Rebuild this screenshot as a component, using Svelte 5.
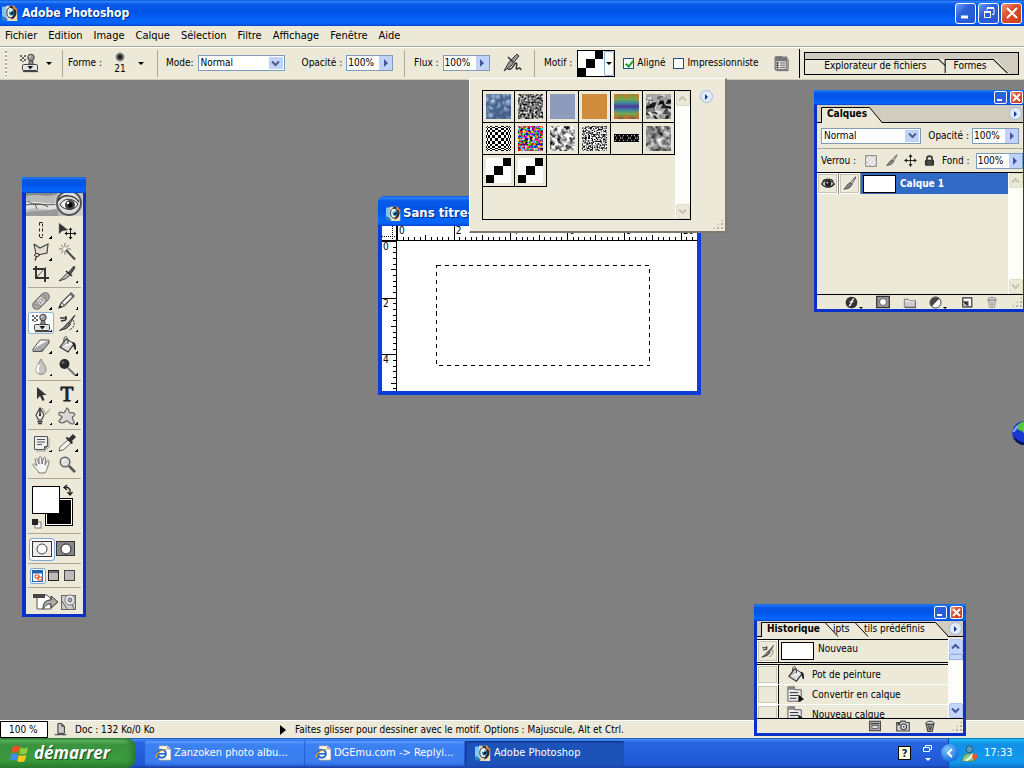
<script>
  const menus = ['Fichier', 'Edition', 'Image', 'Calque', 'Sélection', 'Filtre', 'Affichage', 'Fenêtre', 'Aide'];

  let aligned = $state(true);
  let impressionist = $state(false);

  const icons = {
    marquee: '<path d="M8.500 2.500h3v4M8.500 2.500v4M8.500 8.500v4M11.500 8.500v4M8.500 14v3.500h3V14" fill="none" stroke="#222" stroke-dasharray="3 1"/>',
    move: '<path d="M2 3v11l3-3 6-1z" fill="#333" stroke="#888" stroke-width=".5"/><path d="M13.500 9v9M9 13.500h9" stroke="#111"/><path d="M13.500 7.500l2 2.500h-4zM13.500 19.500l2-2.500h-4zM7.500 13.500l2.500-2v4zM19.500 13.500l-2.500-2v4z" fill="#111"/>',
    lasso: '<path d="M3 2l6 4 8-4-1 9-9 2M3 2l2 10" fill="#e2dfd0" stroke="#444" stroke-width="1.200"/><ellipse cx="6" cy="13" rx="2.500" ry="1.500" fill="none" stroke="#333"/><path d="M5.500 14.500l-1.500 4" stroke="#333" stroke-width="1.300"/>',
    wand: '<path d="M8 7l10 10.500" stroke="#444" stroke-width="2"/><path d="M8 1v4M8 9v4M2 7h4M10 7h4M4 3l2.500 2.500M12 3L9.500 5.500M4 11l2.500-2.500" stroke="#777"/><circle cx="8" cy="7" r="1.500" fill="#fff"/>',
    crop: '<path d="M5 2v12h13M2 5h12v13" fill="none" stroke="#333" stroke-width="2"/><path d="M6 13l9-10" stroke="#555"/>',
    slice: '<path d="M17 2l-6 7 2 2 5-7z" fill="#555" stroke="#222" stroke-width=".7"/><path d="M11 8.500l2.500 2.500L8 15l-6 2z" fill="#bbb" stroke="#444"/><path d="M9 7l6 5" stroke="#222" stroke-width="1.500"/>',
    heal: '<g transform="rotate(-45 10 10)"><rect x="0" y="6" width="20" height="8" rx="4" fill="#aaa9a4" stroke="#666"/><rect x="6.500" y="6.500" width="7" height="7" fill="#d4d4d0" stroke="#888" stroke-width=".7"/><path d="M8 9h1M11 9h1M8 11h1M11 11h1M3 9h1M4 11h1M16 9h1M15 11h1" stroke="#555"/></g>',
    pencil: '<path d="M14 2l3 3L7 15l-5 2 2-5z" fill="#f4f4f4" stroke="#444" stroke-width="1.200"/><path d="M13 3l3.500 3.500M5 12l3 3" stroke="#777" stroke-width="1.300"/><path d="M2 17l1-3 2 2z" fill="#111"/>',
    stamp: '<path d="M1 2h2v2H1zM3 4h2v2H3zM5 2h2v2H5zM1 6h2v2H1zM5 6h2v2H5zM3 8h2v1H3z" fill="#666"/><circle cx="12" cy="4.500" r="3.300" fill="#999" stroke="#444"/><circle cx="11" cy="3.500" r="1" fill="#ddd"/><path d="M10.500 7.500h3l1 5h-5z" fill="#888" stroke="#444"/><rect x="3.500" y="11.500" width="15" height="6" rx="1" fill="#e4e4e0" stroke="#444"/><path d="M8.500 13h5.500l-2.700 3.500z" fill="#111"/><path d="M4 18.500h15" stroke="#444" stroke-width="1.300"/>',
    history: '<path d="M18 2l-7 8 1.500 1.500z" fill="#999" stroke="#333"/><path d="M11 9.500l2.500 2-4 4-7 2 4-3z" fill="#777" stroke="#333"/><path d="M3 5h6M4 8l5-1M9 3v4" stroke="#333" stroke-width="1.500" fill="none"/><path d="M16 7c3 4 0 9-4 10" fill="none" stroke="#333" stroke-dasharray="2 1"/>',
    eraser: '<path d="M9 5h9l-7 9H2z" fill="#f5f5f5" stroke="#555"/><path d="M2 14v2.500h9L18 8V5M11 14v2.500" fill="#aaa" stroke="#555"/>',
    bucket: '<path d="M9 4l8 5-6 8-8-5z" fill="#ddd" stroke="#333" stroke-width="1.200"/><path d="M4 12l8-6 5 3" fill="#f8f8f8" stroke="#666" stroke-width=".7"/><path d="M7 8c-1-8 3-8 4-3v4" fill="none" stroke="#444"/><path d="M15 7c4 0 4 3 4 8-2 0-2-3-3-5z" fill="#222"/>',
    drop: '<path d="M10 2c2 4 5 7 5 10.500a5 5 0 0 1-10 0C5 9 8 6 10 2z" fill="#c4c4c0" stroke="#888"/><path d="M8 8c-2 3-2 6 0 7" stroke="#fff" stroke-width="2.500" fill="none"/>',
    dodge: '<circle cx="7.500" cy="7" r="5" fill="#2a2a2a"/><circle cx="6" cy="5.500" r="1.500" fill="#666"/><path d="M11 11l7 7" stroke="#777" stroke-width="2"/>',
    select: '<path d="M6 3v12l3-3L11.500 17l2-1-2-5h4z" fill="#333"/>',
    pen: '<path d="M9 2l4 7-2.500 5h-3L5 9z" fill="#eee" stroke="#444" stroke-width="1.200"/><path d="M9 2v7M6.500 15.500h5M7 17.500h4" stroke="#333" stroke-width="1.500"/><circle cx="9" cy="9" r="1.200" fill="#333"/><path d="M11 2l4 6 4-5" fill="none" stroke="#333" stroke-dasharray="1 1"/>',
    shape: '<path d="M10 2c3 1 1 4 3 5 4-1 6 1 4 3-5 1 3 7-1 8-4 0-5-4-7-3-2 2-6 3-7 0 1-3 5-3 2-5-3-1-3-4 0-4 3 2 4 0 6-4z" fill="#d8d8d5" stroke="#666" stroke-width="1.200"/>',
    notes: '<path d="M3.500 3.500h13v10l-3 3h-10z" fill="#eee" stroke="#555"/><path d="M13.500 16.500v-3h3" fill="#888" stroke="#555"/><path d="M6 6.500h8M6 9h8M6 11.500h5" stroke="#555"/><path d="M5 18h9l4-4V5" stroke="#999" fill="none"/>',
    dropper: '<path d="M11 7l3 3-8 7-4 1 1-4z" fill="#f4f4f4" stroke="#666"/><path d="M12 5l4-4 3 3-4 4 1 2-1.500 1-6-6L10 4z" fill="#333"/>',
    hand: '<path d="M8 18c-1-3-6-7-6-8.500 1-1.500 2.500 0 4 1.500L4 5c0-2 2-2 2.500 0L8 9V3c.5-2 2-2 2.500 0L11 9l1.500-6c1-1.500 2.500-.5 2 1L14 10l2-4c1-1 2.500-.5 2 1-1 4-2 8-4 11z" fill="#f4f4f2" stroke="#777"/>',
    zoom: '<circle cx="8" cy="7" r="4.800" fill="#ddd" stroke="#666" stroke-width="1.500"/><path d="M12 11l6 6" stroke="#555" stroke-width="2.500"/><path d="M5.500 6.500l2-2" stroke="#fff" stroke-width="1.500"/>',
    brush: '<path d="M18 1l-7 8 2 2 5-8z" fill="#ddd" stroke="#333"/><path d="M11 9l2.500 2.500c-2 4-6 6-11 6 3-2 4-7 8.500-8.500z" fill="#888" stroke="#333"/>',
    airbrush: '<path d="M15 1l-8 8-5 9 7-5 8-10z" fill="#999" stroke="#333"/><path d="M6 4l5 5M6 16c5 2 5-5 8-6 2 0-1 7 1 6s3-2 4 1" fill="none" stroke="#333" stroke-width="1.500"/>',
    page: '<path d="M3.500 3.500h13v14h-13z" fill="#ddd" stroke="#444"/><path d="M4 2.500h7l1 2h5V8H4z" fill="#777"/><path d="M5 10h2M5 12.500h2M5 15h2" stroke="#111" stroke-width="1.500"/><path d="M9 10h6M9 12.500h6M9 15h6" stroke="#666"/><path d="M5 18.500h13V6" fill="none" stroke="#666"/>',
    action: '<path d="M2 2h7v3h7v12H2z" fill="#eee" stroke="#555"/><path d="M2 2h7v3H2z" fill="#888"/><path d="M4 8h9M4 11h9M4 14h7" stroke="#222"/><path d="M13 10v8l6-3z" fill="#111"/>',
    checker: '<rect x="3.500" y="3.500" width="13" height="13" fill="#fff" stroke="#555"/><path d="M4 4h3v3H4zM10 4h3v3h-3zM7 7h3v3H7zM13 7h3v3h-3zM4 10h3v3H4zM10 10h3v3h-3zM7 13h3v3H7zM13 13h3v3h-3z" fill="#ccc"/>',
    cross: '<path d="M10 3v14M3 10h14" stroke="#222" stroke-width="1.500"/><path d="M10 0l3 4.500H7zM10 20l3-4.500H7zM0 10l4.500-3v6zM20 10l-4.500-3v6z" fill="#222"/>',
    lock: '<path d="M6 10V7c0-5 8-5 8 0v3" fill="none" stroke="#333" stroke-width="2.500"/><rect x="3" y="9" width="14" height="9" rx="2" fill="#333"/><path d="M6 12h8M6 15h8" stroke="#777"/>',
    eye: '<path d="M1 10c4-7 13-7 18 0-5 6-14 6-18 0z" fill="#ddd" stroke="#222" stroke-width="1.800"/><circle cx="10" cy="9.500" r="4.500" fill="#222"/><circle cx="9" cy="8" r="1.200" fill="#fff"/><path d="M2 6c4-4 12-4 16 0" fill="none" stroke="#333" stroke-width="1.500"/>',
    effect: '<circle cx="10" cy="10" r="9" fill="#333"/><path d="M14 5c-5-1-3 10-8 10M7 9h6" stroke="#fff" stroke-width="2" fill="none"/>',
    mask: '<rect x="1" y="2" width="18" height="16" fill="#999" stroke="#333" stroke-width="1.800"/><circle cx="10" cy="10" r="5" fill="#fff" stroke="#333"/>',
    folder: '<path d="M2 5h6l2 2h9v10H2z" fill="#ccc" stroke="#666" stroke-width="1.200"/><path d="M3 8h15" stroke="#fff"/><path d="M3 18h17V8" fill="none" stroke="#222"/>',
    adjust: '<circle cx="10" cy="10" r="8.500" fill="#fff" stroke="#333" stroke-width="1.500"/><path d="M16 4A8.500 8.500 0 0 0 4 16z" fill="#444"/>',
    newlayer: '<path d="M3 3h15v15H3z" fill="#fff" stroke="#333" stroke-width="2"/><path d="M3 9h9v9H3z" fill="#bbb" stroke="#333"/><path d="M4 10l7 7v-7z" fill="#222"/>',
    trash: '<path d="M4 7h12l-2 12H6z" fill="#e8e8e8" stroke="#888" stroke-width="1.500"/><path d="M3 5c3-4 11-4 14 0v2H3zM8 9l1 8M12 9l-1 8" fill="#ccc" stroke="#888" stroke-width="1.500"/>',
    trashdark: '<path d="M4 7h12l-2 12H6z" fill="#aaa" stroke="#222" stroke-width="1.500"/><path d="M3 5c3-4 11-4 14 0v2H3zM8 9l1 8M12 9l-1 8" fill="#ddd" stroke="#222" stroke-width="1.500"/>',
    snapshot: '<rect x="1" y="2" width="18" height="16" fill="#aaa" stroke="#333" stroke-width="1.500"/><rect x="5" y="9" width="10" height="5" fill="#ddd" stroke="#333"/><path d="M3 6h14" stroke="#444" stroke-width="2"/>',
    camera: '<path d="M1 5h5l1-2h6l1 2h5v12H1z" fill="#ccc" stroke="#444" stroke-width="1.500"/><path d="M2 5h4v4H2z" fill="#444"/><circle cx="11" cy="11" r="4" fill="#fff" stroke="#333" stroke-width="1.500"/><circle cx="11" cy="11" r="1.500" fill="#444"/>',
    doc: '<path d="M6 1h6l4 4v11H6z" fill="#ccc" stroke="#333" stroke-width="1.500"/><path d="M12 1v4h4M1 18h6M14 18h5M6 18h9" fill="none" stroke="#333" stroke-width="1.500"/>',
    photoshop: '<path d="M0 2h9v16H0z" fill="#7fc8ee"/><path d="M5 1h10l4 7v12H6z" fill="#f2dcb8"/><path d="M0 14c3 0 5 2 8 5H0z" fill="#2d82c0"/><path d="M9 1c6-1 10 4 9 10-1 4-4 7-7 7 4-4 3-11-2-17z" fill="#3a2020"/><path d="M13 4l3-3 1 3 3 1-2 2z" fill="#e08a3a"/><ellipse cx="10.500" cy="9.500" rx="4.500" ry="6.500" fill="#e9f7fa" stroke="#28384a" stroke-width="1.300"/><circle cx="12" cy="10" r="3.200" fill="#1c86b4"/><circle cx="12.500" cy="10" r="1.800" fill="#061522"/><circle cx="11" cy="8" r="1" fill="#fff"/>',
    ie: '<path d="M5 1h11l4 4v14H5z" fill="#fff" stroke="#889"/><path d="M16 1v4h4" fill="#ccd" stroke="#889"/><circle cx="8.500" cy="11" r="5" fill="none" stroke="#1d64d0" stroke-width="2.500"/><path d="M4 11h9" stroke="#1d64d0" stroke-width="2"/><path d="M1 16C1 11 9 4 15 6" fill="none" stroke="#e4a32b" stroke-width="1.400"/>',
    flag: '<path d="M3 3c3-2 5-1 7 0L8.500 9.500c-2-1-4-1-7 .5z" fill="#f25022"/><path d="M11 3.500c3 1.500 5 1.500 8 0L17.500 10c-3 1.500-5 1-8 0z" fill="#8ccf3c"/><path d="M1.200 11c3-1.500 5-1 7 0L6.500 17.500c-2-1-4-1.500-6.500 0z" fill="#3f8df5"/><path d="M9.200 11.500c3 1 5 1.500 8 0L15.500 18c-3 1.500-5 1-8 0z" fill="#ffc91f"/>',
    buddy: '<circle cx="10" cy="5" r="4" fill="#5a9ac8" stroke="#254"/><path d="M1 19c1-7 5-9 9-9s6 4 6 9z" fill="#8cc880" stroke="#375"/><path d="M2 18c4-1 9-4 11-9l2 4-7 6z" fill="#e4f4e0"/><path d="M14 11c2-2 4-1 5 1s-1 5-3 6c-2-1-4-4-2-7z" fill="#e4582b"/>',
    globe: '<circle cx="10" cy="10" r="9.800" fill="#1a36d0"/><path d="M5 3c3-3 8-3 11-1l3 7-5 1-2 3-3-4-4-2z" fill="#4fc83c"/><path d="M9 5l4 2-3 2z" fill="#a8c830"/><path d="M1 13a9.500 9.500 0 0 0 15 5c-6 1-11-1-15-5z" fill="#06124a"/><path d="M1 9l4-5" stroke="#8aa2ff" stroke-width="2"/>'
  };

  const toolGroups = [
    ['marquee', 'move', 'lasso', 'wand', 'crop', 'slice'],
    ['heal', 'pencil', 'stamp', 'history', 'eraser', 'bucket', 'drop', 'dodge'],
    ['select', 'type', 'pen', 'shape'],
    ['notes', 'dropper', 'hand', 'zoom']
  ];
  const single = ['move', 'wand', 'hand', 'crop', 'zoom'];

  const patterns = ['bubbles', 'grain', 'denim', 'orange', 'rainbow', 'shards', 'weave', 'confetti', 'fog', 'speckle', 'strip', 'smoke', 'steps', 'steps'];

  function random(seed) {
    let s = seed;
    return () => {
      s = (s * 16807) % 2147483647;
      return s / 2147483647;
    };
  }
  const rb = random(7);
  const bubbles = Array.from({ length: 26 }, () => ({ x: rb() * 25, y: rb() * 25, r: 3 + rb() * 3 }));
  const rs = random(3100);
  const shards = Array.from({ length: 60 }, () => {
    const x = rs() * 27 - 2;
    const y = rs() * 27 - 2;
    const v = Math.round(rs() * 245);
    const p = [x, y, x + rs() * 7, y + rs() * 5 - 3, x + rs() * 6 + 1, y + rs() * 4 + 2, x - 2, y + rs() * 5];
    return { p: p.map((n) => n.toFixed(1)).join(' '), c: `rgb(${v},${v},${v})` };
  });
  const checks = [];
  const edges = [0, 1, 2, 4, 6, 9, 12, 15, 18, 20, 22, 23, 24, 25];
  for (let i = 0; i < 13; i++) {
    for (let j = 0; j < 13; j++) {
      if ((i + j) % 2) checks.push({ x: edges[i], y: edges[j], w: edges[i + 1] - edges[i], h: edges[j + 1] - edges[j] });
    }
  }

  const unit = 28.35;
  const ticks = Array.from({ length: 53 }, (_, i) => ({ at: Math.round((i * unit) / 5) + 1, i }));
  const size = (i) => (i % 10 === 0 ? 15 : i % 5 === 0 ? 6 : 4);
</script>

{#snippet icon(name, px = 20)}
  <svg class="icon" width={px} height={px} viewBox="0 0 20 20" aria-hidden="true">{@html icons[name]}</svg>
{/snippet}

{#snippet swatch(name)}
  <svg class="icon" width="25" height="25" viewBox="0 0 25 25" aria-hidden="true">
    {#if name === 'bubbles'}
      <rect width="25" height="25" fill="#5f7fa6" />
      {#each bubbles as b}<circle cx={b.x} cy={b.y} r={b.r} fill="url(#ball)" />{/each}
      <circle cx="8" cy="9" r="4.500" fill="url(#ball)" /><path d="M6 8l2-2" stroke="#fff" />
    {:else if name === 'orange'}
      <rect width="25" height="25" fill="#d08c3a" />
    {:else if name === 'denim'}
      <rect width="25" height="25" fill="#8c9abc" />
      <path d="M0 2h25M0 6h25M0 10h25M0 14h25M0 18h25M0 22h25" stroke="#96a3c3" stroke-dasharray="2 1" />
    {:else if name === 'rainbow'}
      <rect width="25" height="25" fill="url(#spectrum)" />
      <path d="M0 0h4l-1 6-3 3zM9 0h7l-3 7zM25 0h-4l1 6 3 3zM0 25h4l-1-6-3-3zM9 25h7l-3-7zM25 25h-4l1-6 3-3z" fill="#d07b30" opacity=".6" />
    {:else if name === 'shards'}
      <rect width="25" height="25" fill="#aaa" />
      {#each shards as s}<polygon points={s.p} fill={s.c} />{/each}
    {:else if name === 'weave'}
      <rect width="25" height="25" fill="#fff" />
      {#each checks as c}<rect x={c.x} y={c.y} width={c.w} height={c.h} />{/each}
    {:else if name === 'strip'}
      <rect y="8" width="25" height="8" />
      <path d="M1 9l2 3-2 3M5 9l2 3-2 3M10 9l-2 3 2 3M13 9l2 3-2 3M18 9l-2 3 2 3M20 9l2 3-2 3M25 9l-2 3 2 3" stroke="#fff" fill="none" stroke-dasharray="1 1" />
    {:else if name === 'steps'}
      <path d="M-1-1h26v26h-26z" fill="#fff" />
      <path d="M0 17h8v8H0zM8 8h9v9H8zM17 0h8v8h-8z" />
    {:else}
      <rect width="25" height="25" filter="url(#{name})" />
    {/if}
  </svg>
{/snippet}

{#snippet percent(id)}
  <span class="field percent"><input {id} value="100%" /><button aria-label="Régler"><i class="play"></i></button></span>
{/snippet}

{#snippet chevron(dir)}
  <svg class="icon" width="9" height="7" viewBox="0 0 9 7" aria-hidden="true"><path d={dir === 'up' ? 'M1 5.500l3.500-3.500 3.500 3.500' : 'M1 1.500l3.500 3.500 3.500-3.500'} fill="none" stroke="currentColor" stroke-width="2" /></svg>
{/snippet}

{#snippet smallControls()}
  <button class="ctl min" aria-label="Réduire"><svg viewBox="0 0 11 11" width="11" height="11"><path d="M2 8h5" stroke="#fff" stroke-width="2" /></svg></button>
  <button class="ctl close" aria-label="Fermer"><svg viewBox="0 0 11 11" width="11" height="11"><path d="M2 2l7 7M9 2l-7 7" stroke="#fff" stroke-width="2" /></svg></button>
{/snippet}

<svg width="0" height="0" class="defs" aria-hidden="true">
  <defs>
    <radialGradient id="ball" cx=".35" cy=".3"><stop offset="0" stop-color="#a9c0da" /><stop offset=".5" stop-color="#7490b4" /><stop offset="1" stop-color="#46628a" /></radialGradient>
    <linearGradient id="spectrum" x2="0" y2="1"><stop offset="0" stop-color="#a08030" /><stop offset=".2" stop-color="#6fae4a" /><stop offset=".35" stop-color="#3f8a9a" /><stop offset=".5" stop-color="#4a3a9a" /><stop offset=".65" stop-color="#3f8a9a" /><stop offset=".8" stop-color="#6fae4a" /><stop offset="1" stop-color="#a04a30" /></linearGradient>
    <filter id="grain" x="0" y="0" width="1" height="1" color-interpolation-filters="sRGB"><feTurbulence type="fractalNoise" baseFrequency=".5" numOctaves="2" seed="3" /><feColorMatrix values="2 0 0 0 -.55 2 0 0 0 -.55 2 0 0 0 -.55 0 0 0 0 1" /></filter>
    <filter id="speckle" x="0" y="0" width="1" height="1" color-interpolation-filters="sRGB"><feTurbulence type="fractalNoise" baseFrequency=".6" numOctaves="2" seed="8" /><feColorMatrix values="3.500 0 0 0 -1.150 3.500 0 0 0 -1.150 3.500 0 0 0 -1.150 0 0 0 0 1" /></filter>
    <filter id="confetti" x="0" y="0" width="1" height="1" color-interpolation-filters="sRGB"><feTurbulence type="fractalNoise" baseFrequency=".4" numOctaves="2" seed="5" /><feColorMatrix values="4 0 0 0 -1.450 0 3 0 0 -1.100 0 0 4 0 -1.500 0 0 0 0 1" /></filter>
    <filter id="fog" x="0" y="0" width="1" height="1" color-interpolation-filters="sRGB"><feTurbulence type="fractalNoise" baseFrequency=".25" numOctaves="2" seed="12" /><feColorMatrix values="2.200 0 0 0 -.4 2.200 0 0 0 -.4 2.200 0 0 0 -.4 0 0 0 0 1" /></filter>
    <filter id="smoke" x="0" y="0" width="1" height="1" color-interpolation-filters="sRGB"><feTurbulence type="fractalNoise" baseFrequency=".18" numOctaves="2" seed="21" /><feColorMatrix values="1.500 0 0 0 -.2 1.500 0 0 0 -.2 1.500 0 0 0 -.2 0 0 0 0 1" /></filter>
  </defs>
</svg>

<div class="desktop">
  <header class="titlebar">
    {@render icon('photoshop', 16)}
    <h1>Adobe Photoshop</h1>
    <div class="controls">
      <button class="big" aria-label="Réduire"><svg viewBox="0 0 18 18" width="18" height="18"><path d="M4 13h7" stroke="#fff" stroke-width="3" /></svg></button>
      <button class="big" aria-label="Restaurer"><svg viewBox="0 0 18 18" width="18" height="18"><path d="M7 6.500V4.500h7v6h-2M4.500 8.500h6v5h-6z" fill="none" stroke="#fff" /><path d="M7 4h7M4 8h7" stroke="#fff" stroke-width="2" /></svg></button>
      <button class="big close" aria-label="Fermer"><svg viewBox="0 0 18 18" width="18" height="18"><path d="M4 4l10 10M14 4L4 14" stroke="#fff" stroke-width="2" /></svg></button>
    </div>
  </header>

  <nav class="menubar">
    {#each menus as m}<button>{m}</button>{/each}
  </nav>

  <section class="options">
    <div class="group tool"><i class="grip"></i>{@render icon('stamp')}<i class="down"></i></div>
    <div class="group forme"><span>Forme :</span><span class="tip"><i></i><b>21</b></span><i class="down"></i></div>
    <div class="group mode">
      <label for="mode">Mode:</label>
      <span class="field drop"><select id="mode"><option>Normal</option></select><i>{@render chevron('down')}</i></span>
      <label class="opacity" for="opacity">Opacité :</label>
      {@render percent('opacity')}
    </div>
    <div class="group flux">
      <label for="flux">Flux :</label>
      {@render percent('flux')}
      {@render icon('airbrush')}
    </div>
    <div class="group motif">
      <span>Motif :</span>
      <button class="motif-pick" aria-label="Motif">{@render swatch('steps')}<i><i class="down"></i></i></button>
      <label class="check"><input type="checkbox" bind:checked={aligned} />Aligné</label>
      <label class="check"><input type="checkbox" bind:checked={impressionist} />Impressionniste</label>
      <span class="palettes">{@render icon('page', 18)}</span>
    </div>
    <div class="well">
      <div class="well-box">
        <button class="explorer">Explorateur de fichiers</button>
        <button class="formes">Formes</button>
        <svg class="well-lines" viewBox="0 0 212 16" preserveAspectRatio="none" aria-hidden="true"><path d="M0 .5h133l7 7M139.500 15V.5h48l14 14.500" fill="none" stroke="#000" /></svg>
      </div>
    </div>
  </section>

  <main class="canvas"></main>

  <footer class="status">
    <input aria-label="Zoom" value="100 %" />
    {@render icon('doc', 13)}
    <span class="docsize">Doc : 132 Ko/0 Ko</span>
    <i class="more"></i>
    <span>Faites glisser pour dessiner avec le motif. Options : Majuscule, Alt et Ctrl.</span>
  </footer>

  <footer class="taskbar">
    <button class="start">{@render icon('flag', 19)}<span>démarrer</span></button>
    <button class="task">{@render icon('ie', 16)}Zanzoken photo albu...</button>
    <button class="task">{@render icon('ie', 16)}DGEmu.com -&gt; Replyi...</button>
    <button class="task active">{@render icon('photoshop', 16)}Adobe Photoshop</button>
    <div class="lang">
      <b class="help">?</b>
      <svg width="10" height="18" viewBox="0 0 10 18" aria-hidden="true"><path d="M2.500 3V1.500h6v4H7M.5 3.500h6v4h-6z" fill="none" stroke="#fff" /><path d="M2 14h6l-3 3z" fill="#fff" /></svg>
    </div>
    <div class="tray">
      <button class="expand" aria-label="Afficher les icônes"><svg width="18" height="18" viewBox="0 0 18 18"><path d="M11 5L7 9l4 4" fill="none" stroke="#fff" stroke-width="2" /></svg></button>
      {@render icon('buddy', 17)}
      <time>17:33</time>
    </div>
  </footer>

  <section class="window document">
    <header>{@render icon('photoshop', 15)}<h2>Sans titre-1</h2></header>
    <div class="page">
      <svg class="corner" width="15" height="15" aria-hidden="true"><path d="M10.500 0v15M0 10.500h15" stroke="#000" stroke-dasharray="1 1" /></svg>
      <svg class="ruler top" width="300" height="15" shape-rendering="crispEdges" aria-hidden="true">
        {#each ticks as t}<path d="M{t.at} 15v-{size(t.i)}" stroke="#000" transform="translate(-.5 0)" />{/each}
        {#each [0, 2, 4, 6, 8, 10] as n}<text x={n * unit + 2} y="8">{n}</text>{/each}
      </svg>
      <svg class="ruler side" width="15" height="150" shape-rendering="crispEdges" aria-hidden="true">
        {#each ticks.slice(0, 27) as t}<path d="M15 {t.at}h-{size(t.i)}" stroke="#000" transform="translate(0 -.5)" />{/each}
        {#each [0, 2, 4] as n}<text x="1" y={n * unit + 9}>{n}</text>{/each}
      </svg>
      <div class="sheet">
        <svg width="214" height="101" shape-rendering="crispEdges" aria-hidden="true"><rect x=".5" y=".5" width="213" height="100" fill="none" stroke="#000" stroke-dasharray="4 4" /></svg>
      </div>
    </div>
  </section>

  <aside class="window toolbox">
    <header></header>
    <svg class="banner" width="57" height="23" viewBox="0 0 57 23" aria-hidden="true">
      <rect width="57" height="23" fill="#b9b9b7" />
      <path d="M0 3c10-3 20 2 31-2V0H0z" fill="#888" /><path d="M0 10c10-4 20 3 33-1v6c-12 4-20-2-33 2z" fill="#e2e2e0" />
      <path d="M0 20c12-4 20 0 32-5v8H0z" fill="#999" />
      <path d="M0 12c8-2 20 1 33-1M2 8c6 6 12 0 20 6M9 11l2 5" stroke="#555" fill="none" />
      <path d="M29 6C34-1 48-2 57 3v20H38c-7-4-9-9-9-17z" fill="#cfcfcd" />
      <circle cx="43" cy="10" r="12" fill="#ddd" stroke="#555" stroke-width="2" />
      <path d="M34 12c3-7 12-8 18-1-3 7-13 7-18 1z" fill="#f4f4f4" stroke="#333" />
      <circle cx="44" cy="12" r="5" fill="#444" /><circle cx="44" cy="12" r="2.500" fill="#000" /><circle cx="42" cy="10" r="1.200" fill="#fff" />
      <path d="M32 8c4-7 16-7 21 1" fill="none" stroke="#333" stroke-width="1.500" />
    </svg>
    {#each toolGroups as g}
      <div class="tools">
        {#each g as t}
          <button class:on={t === 'stamp'} class:has-more={!single.includes(t)} aria-label={t}>
            {#if t === 'type'}<span class="letter">T</span>{:else}{@render icon(t)}{/if}
          </button>
        {/each}
      </div>
    {/each}
    <div class="colors">
      <svg width="44" height="46" viewBox="0 0 44 46" aria-hidden="true">
        <rect x="13.500" y="14.500" width="27" height="27" fill="#000" stroke="#000" /><rect x="14.500" y="15.500" width="25" height="25" fill="#000" stroke="#fff" />
        <rect x=".5" y="2.500" width="27" height="27" fill="#fff" stroke="#000" />
        <path d="M33 3.500h3l2 2v5M35 1l-3 2.500 3 2.500M35.500 8l2.500 3 2.500-3" fill="none" stroke="#222" stroke-width="1.300" />
        <rect x="3" y="38" width="6" height="6" fill="#fff" stroke="#777" /><rect x="0" y="35" width="6" height="6" fill="#222" />
      </svg>
    </div>
    <div class="modes">
      <button class="lit" aria-label="Mode standard"><svg width="21" height="17"><rect x=".5" y=".5" width="19" height="15" fill="#eee" stroke="#333" /><circle cx="10" cy="8" r="5" fill="#fff" stroke="#444" /></svg></button>
      <button aria-label="Mode masque"><svg width="21" height="17"><rect x=".5" y=".5" width="18" height="14" fill="#888" stroke="#333" /><circle cx="10" cy="8" r="5" fill="#fff" stroke="#222" /></svg></button>
    </div>
    <div class="screens">
      <button class="lit" aria-label="Fenêtres standard"><svg width="12" height="12"><rect x=".5" y=".5" width="10" height="11" fill="#fff" stroke="#26a" /><path d="M1 2h10" stroke="#26a" stroke-width="3" /><path d="M3 5h4v3H3zM6 7h4v3H6z" fill="none" stroke="#e54a20" /></svg></button>
      <button aria-label="Plein écran avec menus"><svg width="12" height="12"><rect x=".5" y=".5" width="10" height="10" fill="#bbb" stroke="#222" /><path d="M1 2h10" stroke="#222" /></svg></button>
      <button aria-label="Plein écran"><svg width="12" height="12"><rect x=".5" y=".5" width="10" height="10" fill="#bbb" stroke="#444" /></svg></button>
    </div>
    <button class="jump" aria-label="Passer à ImageReady">
      <svg width="44" height="18" viewBox="0 0 44 18" aria-hidden="true"><path d="M4 2h10l4 4v10H4z" fill="#fff" stroke="#555" /><path d="M0 4h12M0 2h12" stroke="#444" stroke-width="2" /><path d="M10 16c0-7 3-9 8-9V3l7 6-7 6v-4c-4 0-5 1-8 5z" fill="#aaa" stroke="#333" /><rect x="28.500" y="2.500" width="14" height="14" fill="#ccc" stroke="#666" /><circle cx="37" cy="7" r="5" fill="#eee" stroke="#777" /><circle cx="37" cy="7" r="2" fill="#aaa" stroke="#666" /><path d="M29 8l5 8M39 11l2 5" stroke="#666" /></svg>
    </button>
  </aside>

  <aside class="window layers">
    <header>{@render smallControls()}</header>
    <div class="tabs"><svg width="66" height="16" aria-hidden="true"><path d="M4.500 16V.500h48l13 15.500z" fill="#ece9d8" /><path d="M4.500 16V.5h48l13 15.500" fill="none" stroke="#000" /></svg><b>Calques</b><span class="disc"><i class="play"></i></span></div>
    <div class="row first">
      <span class="field drop"><select aria-label="Mode de fusion"><option>Normal</option></select><i>{@render chevron('down')}</i></span>
      <label for="layer-opacity">Opacité :</label>{@render percent('layer-opacity')}
    </div>
    <div class="row second">
      <span class="verrou">Verrou :</span>
      {@render icon('checker', 16)}{@render icon('brush', 13)}{@render icon('cross', 13)}{@render icon('lock', 13)}
      <label for="fill">Fond :</label>{@render percent('fill')}
    </div>
    <div class="list">
      <div class="layer-row">
        <span class="cell">{@render icon('eye', 14)}</span><span class="cell">{@render icon('brush', 15)}</span>
        <span class="thumb"></span><b>Calque 1</b>
      </div>
      <div class="scroll off"><button aria-label="Haut">{@render chevron('up')}</button><button aria-label="Bas">{@render chevron('down')}</button></div>
    </div>
    <div class="foot">
      <span class="drops">{@render icon('effect', 13)}<i class="down"></i></span>{@render icon('mask', 14)}{@render icon('folder', 13)}<span class="drops">{@render icon('adjust', 13)}<i class="down"></i></span>{@render icon('newlayer', 12)}{@render icon('trash', 12)}<i class="size"></i>
    </div>
  </aside>

  <aside class="window historique">
    <header>{@render smallControls()}</header>
    <div class="tabs">
      <svg width="195" height="15" aria-hidden="true"><path d="M4 15V.500h174l13 14.500z" fill="#ece9d8" /><path d="M4.500 15V.5h174l13 14M68 .500l13 14M98 .500l13 14" fill="none" stroke="#000" /></svg>
      <b>Historique</b><span class="t2">ipts</span><span class="t3">tils prédéfinis</span><span class="disc"><i class="play"></i></span>
    </div>
    <div class="states">
      <div class="entries">
        <div class="entry snap"><span class="cell">{@render icon('history', 15)}</span><span class="thumb"></span><span>Nouveau</span></div>
        <div class="entry"><span class="cell"><i></i></span>{@render icon('bucket', 19)}<span>Pot de peinture</span></div>
        <div class="entry"><span class="cell"><i></i></span>{@render icon('action', 19)}<span>Convertir en calque</span></div>
        <div class="entry"><span class="cell"><i></i></span>{@render icon('action', 19)}<span>Nouveau calque</span></div>
      </div>
      <div class="scroll"><button aria-label="Haut">{@render chevron('up')}</button><i class="thumbpad"></i><button aria-label="Bas">{@render chevron('down')}</button></div>
    </div>
    <div class="foot">
      {@render icon('snapshot', 12)}{@render icon('camera', 14)}{@render icon('trashdark', 12)}<i class="size"></i>
    </div>
  </aside>

  <section class="picker">
    <div class="picker-box">
      <div class="swatches">
        {#each patterns as p}<button aria-label="Motif {p}">{@render swatch(p)}</button>{/each}
      </div>
      <div class="scroll off"><button aria-label="Haut">{@render chevron('up')}</button><button aria-label="Bas">{@render chevron('down')}</button></div>
    </div>
    <button class="disc" aria-label="Options des motifs"><i class="play"></i></button>
    <i class="size"></i>
  </section>

  <div class="globe">{@render icon('globe', 24)}</div>
</div>

<style>
  :global(body) { background: #808080; }
  * { box-sizing: border-box; }
  button, input, select { font: inherit; color: inherit; margin: 0; padding: 0; border: 0; background: none; border-radius: 0; appearance: none; outline: 0; min-width: 0; }
  h1, h2 { margin: 0; }
  .defs { position: absolute; }
  .icon { display: block; flex: none; }
  .desktop { position: relative; min-height: 100vh; display: flex; flex-direction: column; overflow: hidden; background: #808080; color: #000; font: 10px/12px "DejaVu Sans Condensed", "DejaVu Sans", sans-serif; white-space: nowrap; }

  .titlebar, .window > header { background: linear-gradient(#0a52d8 0, #2a84f8 6%, #0a5ae8 16%, #0053e6 45%, #0566fc 82%, #0560f4 92%, #0040c8 100%); color: #fff; }
  .titlebar { height: 26px; display: flex; align-items: center; padding: 0 2px 0 2px; gap: 4px; }
  .titlebar h1, .document h2 { font: 700 12px/16px "DejaVu Sans Condensed", sans-serif; text-shadow: 1px 1px #0a2a80; }
  .document h2 { font-size: 13px; }
  .controls { margin-left: auto; display: flex; gap: 2px; }
  .big { width: 21px; height: 21px; border: 1px solid #fff; border-radius: 3px; background: linear-gradient(135deg, #6f9cf4, #2a5fdc 40%, #2458d4); display: grid; place-items: center; }
  .close { background: linear-gradient(135deg, #ee9a80, #dd5030 40%, #cc3b18) !important; }

  .menubar { height: 20px; background: #ece9d8; display: flex; padding-left: 5px; gap: 11px; font-size: 11px; line-height: 18px; }
  .options { height: 34px; background: #ece9d8; border-top: 1px solid #aca899; border-bottom: 1px solid #d0ccbc; box-shadow: inset 0 1px #fff; display: flex; align-items: center; padding-left: 5px; }
  .group { height: 27px; display: flex; align-items: center; border-right: 1px solid #aca899; flex: none; }
  .tool { width: 58px; gap: 7px; }
  .grip { width: 2px; height: 25px; margin-right: 5px; background: repeating-linear-gradient(#a8a594 0 2px, #fff 2px 4px); }
  .down { display: block; border: 3px solid transparent; border-top: 3px solid #000; border-bottom: 0; flex: none; }
  .forme { width: 95px; padding-left: 5px; gap: 5px; }
  .tip { width: 26px; text-align: center; line-height: 10px; }
  .tip i { display: block; width: 10px; height: 10px; margin: 0 auto 2px; border-radius: 50%; background: radial-gradient(#111 10%, #666 45%, transparent 72%); }
  .tip b { font-weight: 400; }
  .mode { width: 247px; padding-left: 8px; gap: 4px; }
  .opacity { margin-left: 13px; }
  .flux { width: 130px; padding-left: 9px; gap: 4px; }
  .flux > :global(svg) { margin-left: 8px; }
  .motif { width: 264px; padding-left: 9px; gap: 5px; border-right: 0; }
  .motif .check { margin-left: 3px; }
  .palettes { margin: 0 auto; }
  .field { display: flex; height: 16px; border: 1px solid #7f9db9; background: #fff; flex: none; }
  .field input { width: 32px; padding-left: 1px; }
  .field.percent { width: 47px; }
  .field button, .field > i { width: 13px; flex: none; display: grid; place-items: center; background: #c1d3fb; color: #4d6185; }
  .play { display: block; width: 4px; height: 8px; border: 4px solid transparent; border-left: 4px solid #3f5a9a; border-right: 0; }
  .drop { width: 87px; position: relative; }
  .drop select { width: 100%; padding-left: 2px; line-height: 14px; }
  .drop > i { position: absolute; right: 1px; top: 1px; bottom: 1px; width: 14px; pointer-events: none; }
  .motif-pick { width: 38px; height: 27px; border: 1px solid #000; display: flex; align-items: center; background: #fff; }
  .motif-pick > i { width: 10px; height: 25px; display: grid; place-items: center; margin-left: auto; border: 1px solid #8fb0d8; border-radius: 2px; background: #fff; }
  .check { display: flex; align-items: center; gap: 3px; }
  .check input { width: 11px; height: 11px; border: 1px solid #1c5180; background: #fff; position: relative; }
  .check input:checked::after { content: ""; position: absolute; left: 3px; top: 0; width: 3px; height: 6px; border: solid #21a121; border-width: 0 2px 2px 0; transform: rotate(40deg); }
  .well { flex: 1; height: 29px; border-left: 1px solid #000; padding: 3px 5px 3px 4px; }
  .well-box { position: relative; height: 23px; border: 1px solid #000; background: #d0ccc0; padding-top: 6px; display: flex; }
  .explorer { width: 66%; background: #ece9d8; height: 15px; }
  .formes { flex: 1; height: 15px; background: linear-gradient(47deg, #ece9d8 74%, #d0ccc0 75%); text-align: left; padding-left: 8px; }
  .well-lines { position: absolute; left: 0; top: 6px; width: 100%; height: 15px; pointer-events: none; }

  .canvas { flex: 1; }
  .status { height: 18px; background: #ece9d8; border-top: 1px solid #fff; display: flex; align-items: center; }
  .status input { width: 48px; height: 17px; border: 1px solid #000; background: #fff; padding-left: 8px; margin-right: 6px; }
  .docsize { margin-left: 8px; width: 205px; }
  .more { border: 5px solid transparent; border-left: 6px solid #000; border-right: 0; margin-right: 9px; }

  .taskbar { height: 30px; display: flex; align-items: center; color: #fff; font-size: 11px; background: linear-gradient(#1941a5 0, #3f8cf3 5%, #2a66e0 14%, #245edb 50%, #2058d2 88%, #1941a5 100%); }
  .start { width: 136px; height: 30px; padding-left: 10px; margin-right: 9px; display: flex; align-items: center; gap: 5px; border-radius: 0 10px 10px 0; background: linear-gradient(#2f7a34 0, #5fb562 8%, #3b9340 22%, #3a9a3c 75%, #2a7a2e 100%); box-shadow: inset -4px 0 5px #2a7a2e; font: italic 700 17px/26px "Open Sans", sans-serif; text-shadow: 1px 1px 1px #1a4a1c; }
  .task { width: 159px; height: 25px; margin-right: 1px; padding-left: 10px; display: flex; align-items: center; gap: 3px; border-radius: 2px; background: linear-gradient(#5a9bfc 0, #3c81f3 15%, #3a7df0 85%, #2a62d8 100%); }
  .task.active { background: #1d52b8; box-shadow: inset 1px 1px 2px #0c3080; }
  .lang { margin-left: auto; display: flex; align-items: center; gap: 12px; }
  .help { width: 13px; height: 14px; background: #ffffe1; color: #124; border: 1px solid #000; text-align: center; line-height: 13px; }
  .tray { width: 76px; margin-left: 15px; height: 30px; display: flex; align-items: center; gap: 2px; background: linear-gradient(#0c59b9 0, #18b9f5 5%, #1290e8 20%, #129aee 80%, #0d6fc6 100%); border-left: 1px solid #0a4a9a; }
  .expand { width: 18px; height: 18px; margin-left: -8px; border-radius: 50%; background: radial-gradient(circle at 35% 30%, #7fc4ff, #1c74e0 70%); }
  .expand svg, .big svg, .ctl svg { display: block; }
  .tray time { margin-left: 4px; }

  .window { position: absolute; background: #ece9d8; border: 3px solid #0831c8; border-top: 0; display: flex; flex-direction: column; }
  .window > header { margin: 0 -3px; flex: none; }
  .document { left: 378px; top: 196px; border-width: 0 4px 4px; border-color: #0a3edb; border-radius: 7px 0 0 0; }
  .document > header { height: 30px; margin: 0 -4px; border-radius: 7px 7px 0 0; display: flex; align-items: center; gap: 2px; padding: 4px 0 0 8px; }
  .page { display: grid; grid-template-columns: 15px 300px; background: #fff; }
  .page svg { display: block; }
  .corner { border: 0 solid #000; border-width: 0 1px 1px 0; }
  .ruler { background: #fff; }
  .ruler.top { border-bottom: 1px solid #000; }
  .ruler.side { border-right: 1px solid #000; }
  .ruler text { font: 10px "DejaVu Sans Condensed", sans-serif; }
  .sheet { padding: 24px 0 0 39px; }

  .toolbox { left: 22px; top: 177px; width: 64px; border-width: 0 3px 3px 4px; }
  .toolbox > header { height: 16px; margin: 0 -3px 0 -4px; }
  .banner { display: block; margin-bottom: 3px; width: 57px; }
  .tools { display: grid; grid-template-columns: 26px 26px; padding: 0 0 2px; margin: 0 2px 2px; border-bottom: 1px solid #aca899; }
  .tools button { height: 22px; display: grid; place-items: center; position: relative; border-radius: 3px; }
  .tools .on { background: #fff; box-shadow: inset 0 0 0 1px #8fb0d8; }
  .has-more::after { content: ""; position: absolute; right: 2px; bottom: 2px; width: 3px; height: 3px; background: linear-gradient(135deg, transparent 50%, #000 50%); }
  .letter { font: 400 21px/22px "Liberation Serif", serif; color: #222; -webkit-text-stroke: 1px #222; }
  .colors, .modes, .screens { margin: 0 2px 2px; border-bottom: 1px solid #aca899; display: flex; align-items: center; }
  .colors { height: 53px; padding: 3px 0 0 4px; align-items: flex-start; }
  .modes { height: 28px; justify-content: space-between; padding: 0 3px 0 2px; }
  .modes button { height: 21px; width: 24px; display: grid; place-items: center; border-radius: 3px; }
  .lit { background: #fff; box-shadow: 0 0 0 1px #7fa6dc; }
  .screens { height: 22px; justify-content: space-between; padding: 0 4px 1px 3px; }
  .screens button { display: grid; place-items: center; height: 14px; width: 14px; border-radius: 2px; }
  .jump { height: 24px; display: grid; place-items: center; }

  .ctl { width: 13px; height: 13px; border: 1px solid #fff; border-radius: 2px; background: #2a5fdc; display: grid; place-items: center; }
  .layers > header, .historique > header { display: flex; justify-content: flex-end; align-items: center; gap: 3px; }
  .layers { top: 90px; right: 0; width: 210px; height: 222px; border-right-width: 1px; }
  .layers > header { height: 15px; margin-right: -1px; padding-right: 1px; }
  .tabs { position: relative; background: #d0ccc0; display: flex; flex: none; border-bottom: 1px solid #000; padding-top: 2px; }
  .layers .tabs { height: 18px; }
  .tabs svg { display: block; flex: none; margin-bottom: -1px; }
  .tabs b, .t2, .t3 { position: absolute; top: 3px; left: 10px; }
  .disc { width: 13px; height: 13px; border-radius: 50%; background: #e4ecfb; border: 1px solid #9db8e8; display: grid; place-items: center; }
  .disc .play { width: 3px; border-width: 3px 0 3px 3px; height: 6px; border-left-color: #0a3a9a; }
  .tabs .disc { position: absolute; right: 1px; top: 2px; }
  .row { display: flex; align-items: center; flex: none; padding: 0 4px; }
  .row label { margin-left: auto; margin-right: 3px; }
  .row.first { height: 26px; border-bottom: 1px solid #aca899; }
  .row .drop { width: 100px; }
  .row.second { height: 23px; gap: 6px; }
  .row.second label { margin-right: 0; }
  .verrou { margin-right: 1px; }
  .list { flex: 1; display: flex; border-top: 1px solid #000; min-height: 0; }
  .layer-row { flex: 1; height: 21px; background: #316ac5; color: #fff; display: flex; align-items: center; }
  .cell { width: 22px; height: 100%; background: #ece9d8; border-right: 1px solid #888; display: grid; place-items: center; box-shadow: inset 0 0 0 1px #fff, inset 0 0 0 2px #c8c5b5; flex: none; }
  .thumb { width: 33px; height: 18px; background: #fff; border: 1px solid #000; margin: 0 4px 0 2px; flex: none; }
  .scroll { width: 15px; background: #fdfdfa; display: flex; flex-direction: column; justify-content: space-between; align-items: center; flex: none; }
  .scroll button { width: 14px; height: 15px; display: grid; place-items: center; border: 1px solid #b0c4f4; border-radius: 2px; background: #c6d6fb; color: #3f5a9a; }
  .scroll.off button { background: #ece9d8; border-color: #dedbcb; color: #c5c2b3; }
  .foot { border-top: 1px solid #000; height: 15px; display: flex; align-items: center; justify-content: space-between; flex: none; }
  .layers .foot { padding-left: 28px; }
  .drops { display: flex; align-items: flex-end; gap: 1px; }
  .drops .down { border-width: 2px 2px 0; }
  .size { display: block; width: 12px; height: 12px; background: radial-gradient(circle, #b8b4a2 1px, transparent 1px) 0 0 / 4px 4px; clip-path: polygon(100% 0, 100% 100%, 0 100%); }

  .historique { right: 58px; bottom: 32px; width: 212px; height: 132px; }
  .historique > header { height: 17px; padding-right: 3px; }
  .historique .tabs { height: 16px; padding-top: 1px; }
  .historique .tabs b, .t2, .t3 { top: 2px; }
  .tabs .t2 { left: 76px; }
  .tabs .t3 { left: 107px; }
  .historique .tabs .disc { top: 1px; }
  .states { flex: 1; display: flex; min-height: 0; overflow: hidden; padding-top: 2px; }
  .entries { flex: 1; overflow: hidden; border-top: 1px solid #000; }
  .entry { height: 20px; display: flex; align-items: center; gap: 7px; border-bottom: 1px solid #fff; }
  .entry .cell { border-right: 1px solid #000; }
  .snap { height: 25px; border-bottom: 3px double #000; gap: 0; }
  .snap > span:last-child { align-self: flex-start; padding-top: 3px; }
  .historique .foot { padding-left: 112px; }
  .thumbpad { width: 14px; height: 6px; border: 1px solid #98b0ec; background: #c6d6fb; margin-bottom: auto; }

  .picker { position: absolute; left: 469px; top: 78px; width: 258px; height: 155px; background: #ece9d8; border: 1px solid #fff; border-width: 1px 2px 2px 1px; border-right-color: #7c7a6e; border-bottom-color: #7c7a6e; padding: 11px 0 0 12px; display: flex; gap: 9px; }
  .picker-box { width: 209px; height: 130px; border: 1px solid #000; display: flex; justify-content: space-between; }
  .swatches { display: grid; grid-template-columns: repeat(6, 32px); grid-auto-rows: 32px; }
  .swatches button { border: 1px solid #000; border-width: 0 1px 1px 0; display: grid; place-items: center; }
  .picker > .size { position: absolute; right: 1px; bottom: 1px; }
  .globe { position: absolute; right: 0; top: 421px; width: 12px; overflow: hidden; }
</style>
